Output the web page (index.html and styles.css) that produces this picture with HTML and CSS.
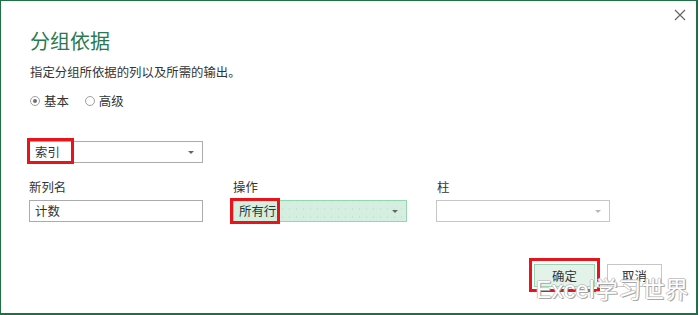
FILE: index.html
```html
<!DOCTYPE html>
<html lang="zh-CN">
  <head>
    <meta charset="UTF-8">
    <title>分组依据</title>
    <link rel="stylesheet" href="styles.css">
  </head>
  <body>
    <div class="dialog">
      <button class="close" aria-label="关闭">
        <svg width="12" height="12" viewBox="0 0 12 12">
          <path d="M1 1 L11 11 M11 1 L1 11" stroke="#666" stroke-width="1.2" fill="none"/>
        </svg>
      </button>

      <h1>分组依据</h1>
      <p class="desc">指定分组所依据的列以及所需的输出。</p>

      <div class="modes">
        <label class="radio"><span class="dot checked"></span>基本</label>
        <label class="radio"><span class="dot"></span>高级</label>
      </div>

      <div class="row">
        <div class="select">
          <span>索引</span>
          <span class="arrow"></span>
          <span class="mark mark-key"></span>
        </div>
      </div>

      <div class="grid">
        <div class="label">新列名</div>
        <div class="label">操作</div>
        <div class="label">柱</div>

        <div class="input">计数</div>
        <div class="select green">
          <span>所有行</span>
          <span class="arrow"></span>
          <span class="mark mark-op"></span>
        </div>
        <div class="select empty">
          <span></span>
          <span class="arrow light"></span>
        </div>
      </div>

      <div class="actions">
        <button class="btn primary">确定<span class="mark mark-ok"></span></button>
        <button class="btn">取消</button>
      </div>

      <div class="watermark">Excel学习世界</div>
    </div>
  </body>
</html>
```

FILE: styles.css
```css
/* Reset */
* {
  margin: 0;
  padding: 0;
  box-sizing: border-box;
  font-family: "Noto Sans CJK SC", "Noto Sans", sans-serif;
}

body {
  width: 700px;
  height: 315px;
  background-color: #ffffff;
  overflow: hidden;
}

.dialog {
  position: relative;
  width: 698px;
  height: 315px;
  border: 1px solid #1e7145;
  border-width: 1px 2px 2px 1px;
  padding: 27px 34px 0 28px;
  color: #333;
}

.close {
  position: absolute;
  top: 7px;
  right: 9px;
  width: 14px;
  height: 14px;
  border: none;
  background: none;
  display: flex;
  align-items: center;
  justify-content: center;
}

h1 {
  font-size: 20px;
  font-weight: 400;
  line-height: 26px;
  color: #2a7a50;
  margin-left: 1px;
}

.desc {
  font-size: 12.4px;
  line-height: 16px;
  margin-top: 10px;
  margin-left: 1px;
}

/* Radio buttons */
.modes {
  display: flex;
  gap: 16px;
  margin-top: 13px;
  margin-left: 1px;
  font-size: 12.4px;
  line-height: 16px;
}

.radio {
  display: flex;
  align-items: center;
  gap: 4px;
}

.dot {
  width: 10px;
  height: 10px;
  border: 1px solid #a0a0a0;
  border-radius: 50%;
  display: flex;
  align-items: center;
  justify-content: center;
}

.dot.checked::after {
  content: "";
  width: 4px;
  height: 4px;
  border-radius: 50%;
  background-color: #707070;
}

/* Fields */
.row {
  margin-top: 32px;
}

.select,
.input {
  position: relative;
  width: 174px;
  height: 22px;
  border: 1px solid #ababab;
  display: flex;
  align-items: center;
  justify-content: space-between;
  padding: 0 8px 0 5px;
  font-size: 12.4px;
  background-color: #ffffff;
}

.select.green {
  background-color: #d4efdf;
  border-color: #98d6b2;
  background-image: radial-gradient(circle, #c8e2cf 0.5px, transparent 0.7px);
  background-size: 7px 8px;
  background-position: 52px 4px;
}

.select.empty {
  border-color: #c6c6c6;
}

.arrow {
  width: 0;
  height: 0;
  border-left: 3px solid transparent;
  border-right: 3px solid transparent;
  border-top: 3px solid #666;
}

.arrow.light {
  border-top-color: #b8b8b8;
}

.grid {
  display: grid;
  grid-template-columns: 174px 174px 174px;
  column-gap: 30px;
  row-gap: 5px;
  margin-top: 16px;
}

.label {
  font-size: 12.4px;
  line-height: 16px;
}

.grid .select.empty {
  margin-left: -1px;
}

/* Buttons */
.actions {
  display: flex;
  justify-content: flex-end;
  gap: 12px;
  margin-top: 42px;
}

.btn {
  position: relative;
  width: 55px;
  height: 23px;
  border: 1px solid #c6c6c6;
  background-color: #ffffff;
  font-size: 12.4px;
  color: #333;
}

.btn.primary {
  width: 61px;
  background-color: #e3f3ea;
  border-color: #9dd4b4;
}

/* Red highlight frames */
.mark {
  position: absolute;
  border: 3px solid #e8141c;
  pointer-events: none;
}

.mark-key {
  left: -3px;
  top: -4px;
  width: 47px;
  height: 26px;
}

.mark-op {
  left: -4px;
  top: -3px;
  width: 50px;
  height: 26px;
}

.mark-ok {
  left: -6px;
  top: -7px;
  width: 71px;
  height: 34px;
}

/* Watermark */
.watermark {
  position: absolute;
  left: 535px;
  top: 275px;
  font-family: "Liberation Sans", "Noto Sans CJK SC", sans-serif;
  font-size: 23px;
  line-height: 28px;
  letter-spacing: 0.5px;
  color: #ffffff;
  text-shadow: 1px 1px 0 #a8a8a8, -1px 0 0 #c8c8c8, 0 -1px 0 #c8c8c8, 1px 0 0 #b0b0b0;
}
```
